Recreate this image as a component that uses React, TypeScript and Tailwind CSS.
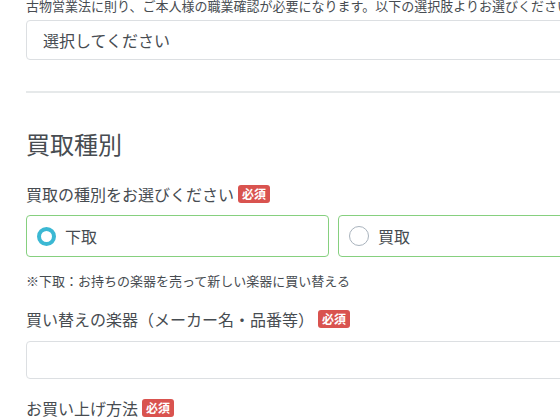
function Badge() {
  return (
    <span className="ml-[4px] inline-flex h-[18px] items-center rounded-[3px] bg-[#d9534f] px-[4px] text-[12px] font-bold leading-none text-white">
      必須
    </span>
  );
}

function Radio({ label, checked }: { label: string; checked?: boolean }) {
  return (
    <label className="flex h-[42px] items-center rounded-[4px] border border-[#86d07f] bg-white pl-[10px]">
      {checked ? (
        <span className="size-[19px] rounded-full border-[4px] border-[#3bb8d3]" />
      ) : (
        <span className="size-[20px] rounded-full border border-[#a9b3bd]" />
      )}
      <span className="ml-[9px] text-[16px]">{label}</span>
    </label>
  );
}

export default function App() {
  return (
    <main className="h-[420px] w-[560px] overflow-hidden bg-white">
      <div className="w-[680px] pl-[26px] font-['Noto_Sans_CJK_JP',sans-serif] text-[#474c51]">
        <p className="-mt-[4px] text-[13px] leading-[20px]">
          古物営業法に則り、ご本人様の職業確認が必要になります。以下の選択肢よりお選びください
        </p>
        <div className="mt-[4px] flex h-[40px] items-center rounded-[4px] border border-[#dcdfe2] px-[16px] text-[16px]">
          選択してください
        </div>
        <hr className="mt-[31px] border-t-2 border-[#e6e9ea]" />
        <h2 className="mt-[35px] text-[24px] leading-[32px]">買取種別</h2>

        <div className="mt-[22px] flex items-center text-[16px] leading-[24px]">
          買取の種別をお選びください
          <Badge />
        </div>
        <div className="mt-[9px] grid w-[615px] grid-cols-2 gap-[9px]">
          <Radio label="下取" checked />
          <Radio label="買取" />
        </div>
        <p className="mt-[14px] text-[13px] leading-[20px]">
          ※下取：お持ちの楽器を売って新しい楽器に買い替える
        </p>

        <div className="mt-[16px] flex items-center text-[16px] leading-[24px]">
          買い替えの楽器（メーカー名・品番等）
          <Badge />
        </div>
        <div className="mt-[10px] h-[38px] rounded-[4px] border border-[#dcdfe2]" />

        <div className="mt-[17px] flex items-center text-[16px] leading-[24px]">
          お買い上げ方法
          <Badge />
        </div>
      </div>
    </main>
  );
}
